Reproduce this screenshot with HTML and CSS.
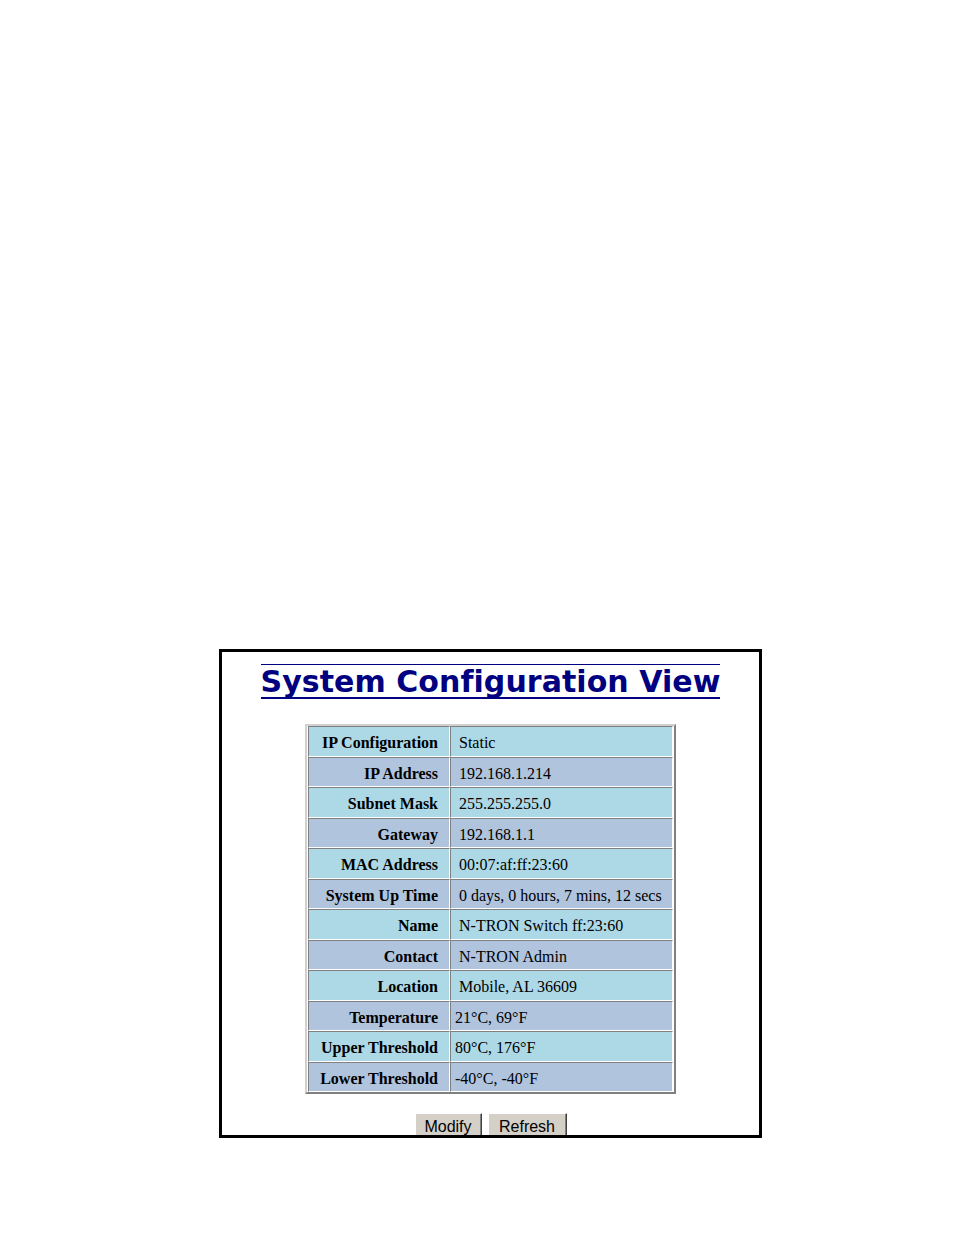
FILE: index.html
```html
<!DOCTYPE html>
<html>
<head>
<meta charset="utf-8">
<link rel="stylesheet" href="styles.css">
</head>
<body>
<div class="page">
  <div class="frame">
    <div class="title-wrap"><h1 class="title">System Configuration View</h1></div>
    <table class="cfg">
      <tr class="r1"><th>IP Configuration</th><td class="ind">Static</td></tr>
      <tr class="r2"><th>IP Address</th><td class="ind">192.168.1.214</td></tr>
      <tr class="r1"><th>Subnet Mask</th><td class="ind">255.255.255.0</td></tr>
      <tr class="r2"><th>Gateway</th><td class="ind">192.168.1.1</td></tr>
      <tr class="r1"><th>MAC Address</th><td class="ind">00:07:af:ff:23:60</td></tr>
      <tr class="r2"><th>System Up Time</th><td class="ind">0 days, 0 hours, 7 mins, 12 secs</td></tr>
      <tr class="r1"><th>Name</th><td class="ind">N-TRON Switch ff:23:60</td></tr>
      <tr class="r2"><th>Contact</th><td class="ind">N-TRON Admin</td></tr>
      <tr class="r1"><th>Location</th><td class="ind">Mobile, AL 36609</td></tr>
      <tr class="r2"><th>Temperature</th><td>21°C, 69°F</td></tr>
      <tr class="r1"><th>Upper Threshold</th><td>80°C, 176°F</td></tr>
      <tr class="r2"><th>Lower Threshold</th><td>-40°C, -40°F</td></tr>
    </table>
    <div class="buttons">
      <button class="btn btn-modify">Modify</button>
      <button class="btn btn-refresh">Refresh</button>
    </div>
  </div>
</div>
</body>
</html>
```
FILE: styles.css
```css
html, body {
  margin: 0;
  padding: 0;
  background: #ffffff;
}
.page {
  padding-top: 649px;
  padding-left: 219px;
}
.frame {
  box-sizing: border-box;
  width: 543px;
  height: 489px;
  border: 3px solid #000000;
  overflow: hidden;
  display: flex;
  flex-direction: column;
  align-items: center;
}
.title-wrap {
  margin-top: 12px;
  display: flex;
  justify-content: center;
}
.title {
  margin: 0;
  font-family: "DejaVu Sans", Verdana, sans-serif;
  font-weight: bold;
  font-size: 30px;
  line-height: 30px;
  padding-top: 2px;
  color: #000080;
  border-top: 1px solid #000080;
  border-bottom: 2px solid #000080;
  letter-spacing: 0.05px;
  white-space: nowrap;
}
.cfg {
  margin-top: 25px;
  width: 371px;
  border-collapse: separate;
  border-spacing: 0;
  border-style: solid;
  border-width: 2px;
  border-color: #d0d0d0 #808080 #808080 #d0d0d0;
  padding: 0 1px;
  font-family: "Liberation Serif", "Times New Roman", serif;
  font-size: 16px;
  color: #000000;
}
.cfg th, .cfg td {
  height: 24.5px;
  padding: 4px 0 0 0;
  border-style: solid;
  border-width: 1px;
  border-color: #808080 #ffffff #ffffff #808080;
  white-space: nowrap;
}
.cfg th {
  width: 129px;
  text-align: right;
  padding-right: 11px;
  font-weight: bold;
}
.cfg td {
  text-align: left;
  padding-left: 4px;
}
.cfg td.ind {
  padding-left: 8px;
}
.r1 th, .r1 td {
  background: #add8e6;
}
.r2 th, .r2 td {
  background: #b0c4de;
}
.buttons {
  margin-top: 19px;
  display: flex;
  gap: 6px;
  justify-content: center;
}
.btn {
  box-sizing: border-box;
  font-family: "Liberation Sans", Arial, sans-serif;
  font-size: 16px;
  background: #d4d0c8;
  color: #000000;
  border-style: solid;
  border-width: 1px;
  border-color: #ffffff #404040 #404040 #ffffff;
  box-shadow: inset -1px -1px 0 #808080;
  height: 28px;
  padding: 0 6px;
  line-height: 22px;
}
.btn-modify { width: 67px; }
.btn-refresh { width: 79px; }
```
